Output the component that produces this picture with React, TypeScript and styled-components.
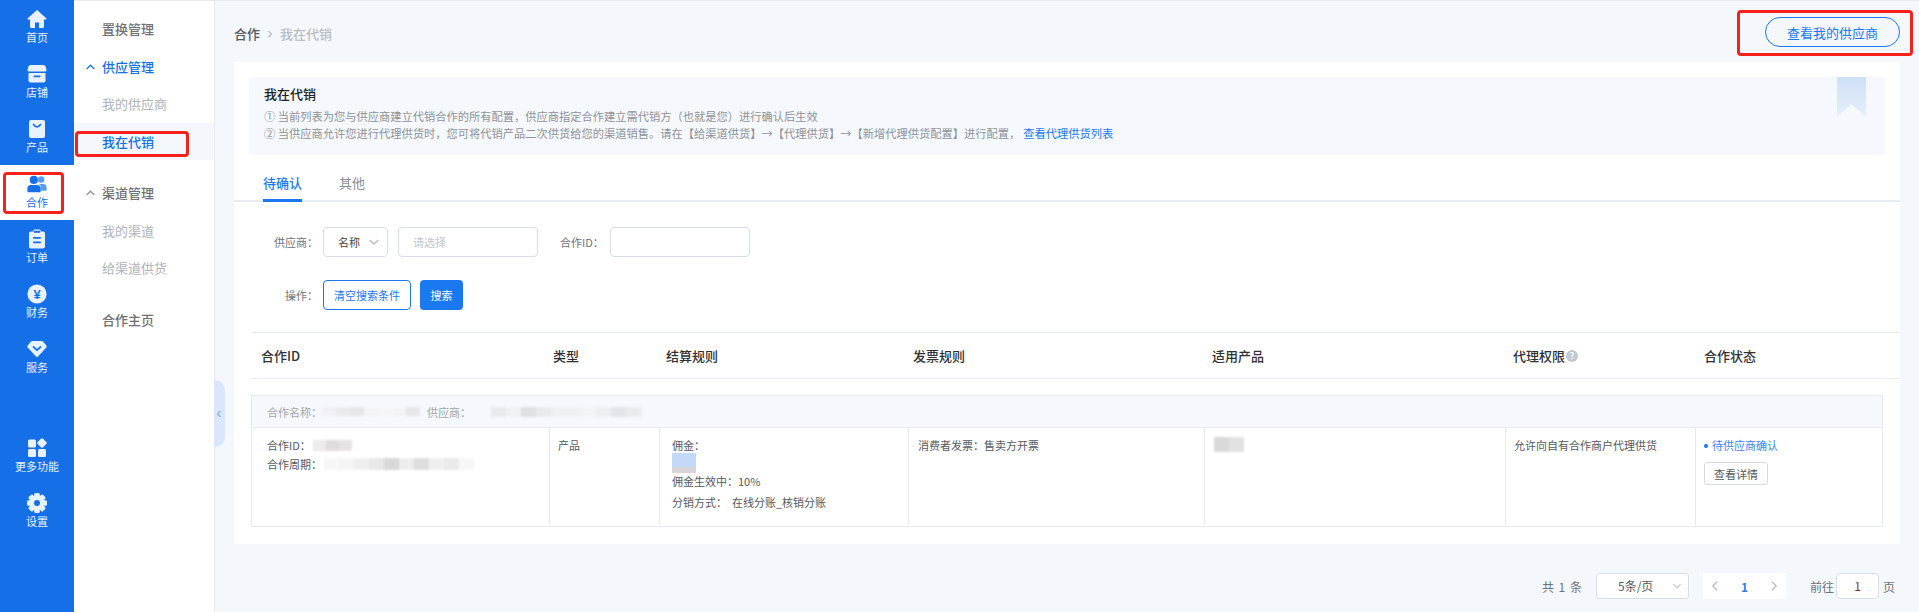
import React from 'react';
import styled, { createGlobalStyle } from 'styled-components';

const GlobalStyle = createGlobalStyle`
  html, body { margin: 0; padding: 0; }
  body {
    font-family: "Noto Sans CJK SC", "Noto Sans", sans-serif;
    background: #f4f7fc;
  }
  * { box-sizing: border-box; }
`;

const navTop = [
  { key: 'home', label: '首页' },
  { key: 'shop', label: '店铺' },
  { key: 'product', label: '产品' },
  { key: 'team', label: '合作', active: true },
  { key: 'order', label: '订单' },
  { key: 'money', label: '财务' },
  { key: 'service', label: '服务' },
];
const navBottom = [
  { key: 'more', label: '更多功能' },
  { key: 'gear', label: '设置' },
];

const NavIcon: React.FC<{ name: string }> = ({ name }) => {
  const cut = '#1570e8';
  switch (name) {
    case 'home':
      return (
        <svg width="20" height="20" viewBox="0 0 20 20">
          <path fill="currentColor" d="M10 1 L0.5 9.6 Q0.2 10.5 1 10.5 H3 V17.5 Q3 19 4.5 19 H8 V13.5 H12 V19 H15.5 Q17 19 17 17.5 V10.5 H19 Q19.8 10.5 19.5 9.6 Z" />
        </svg>
      );
    case 'shop':
      return (
        <svg width="20" height="20" viewBox="0 0 20 20">
          <path fill="currentColor" d="M3.5 1 H16.5 Q18 1 18.6 2.6 L19.5 6 Q19.5 7.5 18 7.5 H2 Q0.5 7.5 0.5 6 L1.4 2.6 Q2 1 3.5 1 Z" />
          <path fill="currentColor" d="M1.5 9 H18.5 V16.5 Q18.5 18.5 16.5 18.5 H3.5 Q1.5 18.5 1.5 16.5 Z" />
          <rect x="6.5" y="11.5" width="7" height="1.8" rx="0.9" fill={cut} />
        </svg>
      );
    case 'product':
      return (
        <svg width="20" height="20" viewBox="0 0 20 20">
          <rect x="2" y="1" width="16" height="18" rx="2" fill="currentColor" />
          <path d="M6.5 5.5 Q10 10.5 13.5 5.5" fill="none" stroke={cut} strokeWidth="1.6" strokeLinecap="round" />
        </svg>
      );
    case 'team':
      return (
        <svg width="20" height="20" viewBox="0 -1 22 22">
          <circle cx="15.5" cy="5" r="3.6" fill="#5b9bf2" />
          <path fill="#5b9bf2" d="M13 10 H18 Q21.5 10 21.5 14 V17.5 H15 V12 Z" />
          <circle cx="7.5" cy="5.5" r="4.5" fill="currentColor" />
          <path fill="currentColor" d="M4 11 H11 Q15 11 15 15 V19 H0.5 V15 Q0.5 11 4 11 Z" />
        </svg>
      );
    case 'order':
      return (
        <svg width="20" height="20" viewBox="0 0 20 20">
          <path fill="currentColor" d="M4 2.5 H6.5 V1.5 Q6.5 0.5 7.5 0.5 H12.5 Q13.5 0.5 13.5 1.5 V2.5 H16 Q18 2.5 18 4.5 V17.5 Q18 19.5 16 19.5 H4 Q2 19.5 2 17.5 V4.5 Q2 2.5 4 2.5 Z" />
          <rect x="7" y="1.8" width="6" height="2" fill={cut} />
          <rect x="6" y="8" width="8" height="1.7" rx="0.8" fill={cut} />
          <rect x="6" y="12.5" width="8" height="1.7" rx="0.8" fill={cut} />
        </svg>
      );
    case 'money':
      return (
        <svg width="20" height="20" viewBox="0 0 20 20">
          <circle cx="10" cy="10" r="9.6" fill="currentColor" />
          <text x="10" y="14.5" textAnchor="middle" fontSize="13" fontWeight="700" fill={cut} fontFamily="Liberation Sans, sans-serif">¥</text>
        </svg>
      );
    case 'service':
      return (
        <svg width="20" height="20" viewBox="0 0 20 20">
          <path fill="currentColor" d="M5.5 2 H14.5 Q15.5 2 16.2 2.8 L19.3 6.6 Q20 7.5 19.3 8.4 L11 17.4 Q10 18.4 9 17.4 L0.7 8.4 Q0 7.5 0.7 6.6 L3.8 2.8 Q4.5 2 5.5 2 Z" />
          <path d="M6.5 8 L10 11.2 L13.5 8" fill="none" stroke={cut} strokeWidth="1.7" strokeLinecap="round" />
        </svg>
      );
    case 'more':
      return (
        <svg width="20" height="20" viewBox="0 0 20 20">
          <rect x="1" y="1.5" width="8" height="8" rx="1.5" fill="currentColor" />
          <rect x="1" y="11" width="8" height="8" rx="1.5" fill="currentColor" />
          <rect x="11" y="11" width="8" height="8" rx="1.5" fill="currentColor" />
          <rect x="11.2" y="1.2" width="7.6" height="7.6" rx="1.5" fill="currentColor" transform="rotate(45 15 5)" />
        </svg>
      );
    default:
      return (
        <svg width="20" height="20" viewBox="0 0 20 20">
          {[0, 45, 90, 135].map(a => (
            <rect key={a} x="7.2" y="0" width="5.6" height="20" rx="1.5" fill="currentColor" transform={`rotate(${a} 10 10)`} />
          ))}
          <circle cx="10" cy="10" r="7.6" fill="currentColor" />
          <circle cx="10" cy="10" r="3" fill={cut} />
        </svg>
      );
  }
};

const Chevron: React.FC<{ dir: 'up' | 'down' | 'left' | 'right'; size?: number; color: string }> = ({ dir, size = 10, color }) => {
  const d = {
    up: 'M2 7 L5 4 L8 7',
    down: 'M2 3.5 L5 6.5 L8 3.5',
    left: 'M6.5 2 L3.5 5 L6.5 8',
    right: 'M3.5 2 L6.5 5 L3.5 8',
  }[dir];
  return (
    <svg width={size} height={size} viewBox="0 0 10 10">
      <path d={d} fill="none" stroke={color} strokeWidth="1" />
    </svg>
  );
};

// pixelated privacy smudges from the screenshot
const Mosaic: React.FC<{ cells: string[]; w: number; h: number }> = ({ cells, w, h }) => (
  <MosaicWrap>
    {cells.map((c, i) => (
      <MosaicCell key={i} $c={c} $w={w} $h={h} />
    ))}
  </MosaicWrap>
);

const columns = [
  { title: '合作ID', head: 10 },
  { title: '类型', head: 5 },
  { title: '结算规则', head: 8 },
  { title: '发票规则', head: 6 },
  { title: '适用产品', head: 9 },
  { title: '代理权限', head: 9, tip: true },
  { title: '合作状态', head: 10 },
];

export default function App() {
  return (
    <Page>
      <GlobalStyle />
      <Sidebar>
        <NavGroup>
          {navTop.map(n => (
            <NavItem key={n.key} $active={n.active}>
              <NavIcon name={n.key} />
              <span>{n.label}</span>
            </NavItem>
          ))}
        </NavGroup>
        <NavGroup $bottom>
          {navBottom.map(n => (
            <NavItem key={n.key}>
              <NavIcon name={n.key} />
              <span>{n.label}</span>
            </NavItem>
          ))}
        </NavGroup>
        <RedBox $left={3} $top={172} $w={61} $h={42} />
      </Sidebar>

      <SubMenu>
        <SubItem $kind="parent">置换管理</SubItem>
        <SubItem $kind="open">
          <Caret><Chevron dir="up" color="#1570e8" size={13} /></Caret>供应管理
        </SubItem>
        <SubItem>我的供应商</SubItem>
        <SubItem $kind="current">我在代销</SubItem>
        <SubItem $kind="parent" $gap>
          <Caret><Chevron dir="up" color="#8a8f99" size={13} /></Caret>渠道管理
        </SubItem>
        <SubItem>我的渠道</SubItem>
        <SubItem>给渠道供货</SubItem>
        <SubItem $kind="parent" $gap>合作主页</SubItem>
        <RedBox $left={1} $top={130} $w={114} $h={26} />
        <Handle><Chevron dir="left" color="#4c8cf0" /></Handle>
      </SubMenu>

      <Main>
        <TopBar>
          <Crumbs>
            <b>合作</b>
            <Chevron dir="right" color="#8a8f99" />
            <em>我在代销</em>
          </Crumbs>
          <PillButton>查看我的供应商</PillButton>
          <RedBox $right={-13} $top={9} $w={176} $h={46} />
        </TopBar>

        <Card>
          <Notice>
            <NoticeTitle>我在代销</NoticeTitle>
            <NoticeLine>① 当前列表为您与供应商建立代销合作的所有配置，供应商指定合作建立需代销方（也就是您）进行确认后生效</NoticeLine>
            <NoticeLine>
              ② 当供应商允许您进行代理供货时，您可将代销产品二次供货给您的渠道销售。请在【给渠道供货】→【代理供货】→【新增代理供货配置】进行配置，
              <NoticeLink>查看代理供货列表</NoticeLink>
            </NoticeLine>
            <Bookmark />
          </Notice>

          <Tabs>
            <Tab $active>待确认</Tab>
            <Tab>其他</Tab>
          </Tabs>

          <FormRow $first>
            <FormLabel>供应商：</FormLabel>
            <SelectBox>
              名称
              <Chevron dir="down" color="#b8bec8" size={14} />
            </SelectBox>
            <TextBox $placeholder>请选择</TextBox>
            <InlineLabel>合作ID：</InlineLabel>
            <TextBox />
          </FormRow>
          <FormRow>
            <FormLabel>操作：</FormLabel>
            <GhostButton>清空搜索条件</GhostButton>
            <SolidButton>搜索</SolidButton>
          </FormRow>

          <TableHead>
            {columns.map(c => (
              <HeadCell key={c.title} $pad={c.head}>
                {c.title}
                {c.tip && <Tip>?</Tip>}
              </HeadCell>
            ))}
          </TableHead>

          <GroupBar>
            <GroupLabel>合作名称：</GroupLabel>
            <Mosaic w={14} h={9} cells={['#f1f1f3', '#eaeaec', '#e6e6e9', '#f4f4f6', '#f6f6f8', '#f3f3f5', '#e7e7ea']} />
            <GroupLabel $ml={7} $mr={20}>供应商：</GroupLabel>
            <Mosaic w={15} h={10} cells={['#e8e9ec', '#f0f1f4', '#dfe0e4', '#e9eaee', '#eff0f3', '#eff0f3', '#f2f3f6', '#eceef2', '#e4e5ea', '#e9ebef']} />
          </GroupBar>

          <Row>
            <Cell $pad={15}>
              <Line>合作ID： <Mosaic w={13} h={11} cells={['#eceaeb', '#dfdcde', '#e6e3e5']} /></Line>
              <Line $mt={3}>合作周期： <Mosaic w={15} h={12} cells={['#f7f7f7', '#f5f5f5', '#efefef', '#e8e8e8', '#d8d8d8', '#eeeeee', '#dedede', '#efefef', '#eaeaea', '#f7f7f7']} /></Line>
            </Cell>
            <Cell $pad={8}>产品</Cell>
            <Cell $pad={12}>
              <Line>佣金：</Line>
              <Smudge />
              <Line>佣金生效中：10%</Line>
              <Line $mt={5}>分销方式：&nbsp;&nbsp;在线分账_核销分账</Line>
            </Cell>
            <Cell $pad={9}>消费者发票：售卖方开票</Cell>
            <Cell $pad={9}>
              <Mosaic w={15} h={15} cells={['#d9d9d9', '#e2e2e2']} />
            </Cell>
            <Cell $pad={8}>允许向自有合作商户代理供货</Cell>
            <Cell $pad={8}>
              <Status>待供应商确认</Status>
              <DetailButton>查看详情</DetailButton>
            </Cell>
          </Row>
        </Card>

        <Footer>
          <TotalCount>共 1 条</TotalCount>
          <PageSize>
            5条/页
            <PageSizeArrow><Chevron dir="down" color="#c3c8d0" size={12} /></PageSizeArrow>
          </PageSize>
          <Pager>
            <Chevron dir="left" color="#b8bec8" size={14} />
            <strong>1</strong>
            <Chevron dir="right" color="#b8bec8" size={14} />
          </Pager>
          <JumpLabel>前往</JumpLabel>
          <JumpInput>1</JumpInput>
          <span>页</span>
        </Footer>
      </Main>
    </Page>
  );
}

const Page = styled.div`
  display: flex;
  width: 1919px;
  height: 612px;
  overflow: hidden;
`;

const Sidebar = styled.aside`
  position: relative;
  flex: 0 0 74px;
  background: #1570e8;
`;

const NavGroup = styled.div<{ $bottom?: boolean }>`
  margin-top: ${p => (p.$bottom ? '44px' : '0')};
`;

const NavItem = styled.div<{ $active?: boolean }>`
  height: 55px;
  padding-top: 9px;
  display: flex;
  flex-direction: column;
  align-items: center;
  font-size: 11px;
  line-height: 16px;
  color: ${p => (p.$active ? '#1570e8' : '#e8f1fe')};
  background: ${p => (p.$active ? '#fff' : 'transparent')};
`;

const SubMenu = styled.nav`
  position: relative;
  flex: 0 0 141px;
  padding-top: 9px;
  background: #fff;
  border-top: 1px solid #e9e9ec;
  border-right: 1px solid #e6ebf3;
`;

const SubItem = styled.div<{ $kind?: 'parent' | 'open' | 'current'; $gap?: boolean }>`
  position: relative;
  height: 37.5px;
  line-height: 37.5px;
  padding-left: 28px;
  margin-top: ${p => (p.$gap ? '14px' : '0')};
  font-size: 13px;
  font-weight: ${p => (p.$kind ? 500 : 400)};
  color: ${p => {
    if (p.$kind === 'open' || p.$kind === 'current') return '#1570e8';
    return p.$kind === 'parent' ? '#6f6f72' : '#b0b3b8';
  }};
  background: ${p => (p.$kind === 'current' ? '#f4f7fc' : 'transparent')};
`;

const Caret = styled.span`
  position: absolute;
  left: 10px;
  top: 12px;
  display: flex;
`;

const Handle = styled.div`
  position: absolute;
  left: 140px;
  top: 379px;
  width: 11px;
  height: 67px;
  display: flex;
  align-items: center;
  background: #d9e6fb;
  border-radius: 0 10px 10px 0;
  z-index: 2;
`;

const RedBox = styled.div<{ $left?: number; $right?: number; $top: number; $w: number; $h: number }>`
  position: absolute;
  ${p => (p.$left !== undefined ? `left: ${p.$left}px;` : '')}
  ${p => (p.$right !== undefined ? `right: ${p.$right}px;` : '')}
  top: ${p => p.$top}px;
  width: ${p => p.$w}px;
  height: ${p => p.$h}px;
  border: 3px solid #f5221b;
  border-radius: 4px;
  z-index: 3;
`;

const Main = styled.main`
  flex: 1;
  min-width: 0;
  padding: 0 19px;
  border-top: 1px solid #e9e9ec;
`;

const TopBar = styled.header`
  position: relative;
  height: 61px;
  display: flex;
  align-items: flex-start;
  justify-content: space-between;
`;

const Crumbs = styled.div`
  display: flex;
  align-items: center;
  gap: 5px;
  margin-top: 23px;
  font-size: 13px;
  line-height: 19px;
  b { font-weight: 500; color: #55585e; }
  em { font-style: normal; font-weight: 500; color: #b9bcc2; }
`;

const PillButton = styled.button`
  width: 135px;
  height: 30px;
  margin-top: 16px;
  padding: 0;
  border: 1px solid #1a78f0;
  border-radius: 15px;
  background: transparent;
  color: #1a78f0;
  font: 13px "Noto Sans CJK SC", sans-serif;
`;

const Card = styled.section`
  height: 482px;
  padding-top: 15px;
  background: #fff;
`;

const Notice = styled.div`
  position: relative;
  height: 78px;
  margin: 0 15px;
  padding: 7px 15px 0;
  background: #f5f8fd;
`;

const NoticeTitle = styled.div`
  font-size: 13px;
  font-weight: 500;
  line-height: 19px;
  color: #222;
  margin-bottom: 5px;
`;

const NoticeLine = styled.div`
  font-size: 11.25px;
  line-height: 17px;
  color: #8f9298;
`;

const NoticeLink = styled.span`
  margin-left: 3px;
  color: #1a78f0;
`;

const Bookmark = styled.div`
  position: absolute;
  right: 19px;
  top: 0;
  width: 29px;
  height: 40px;
  background: linear-gradient(180deg, #cfe0f5, #e6effb);
  clip-path: polygon(0 0, 100% 0, 100% 100%, 50% 68%, 0 100%);
`;

const Tabs = styled.div`
  display: flex;
  align-items: flex-end;
  gap: 37px;
  height: 47px;
  padding-left: 29px;
  border-bottom: 2px solid #e8edf3;
`;

const Tab = styled.div<{ $active?: boolean }>`
  height: 32px;
  margin-bottom: -2px;
  padding-top: 3px;
  font-size: 13px;
  line-height: 19px;
  font-weight: ${p => (p.$active ? 500 : 400)};
  color: ${p => (p.$active ? '#1a78f0' : '#8a8d93')};
  border-bottom: ${p => (p.$active ? '3px solid #1a78f0' : 'none')};
`;

const FormRow = styled.div<{ $first?: boolean }>`
  display: flex;
  align-items: center;
  height: 30px;
  margin-top: ${p => (p.$first ? '25px' : '23px')};
`;

const FormLabel = styled.label`
  width: 84px;
  margin-right: 5px;
  text-align: right;
  font-size: 11px;
  color: #6f7278;
`;

const InlineLabel = styled.label`
  width: 50px;
  margin-left: 22px;
  font-size: 11px;
  color: #6f7278;
`;

const SelectBox = styled.div`
  width: 65px;
  height: 30px;
  margin-right: 10px;
  display: flex;
  align-items: center;
  justify-content: space-between;
  padding: 0 6px 0 14px;
  border: 1px solid #d8dee8;
  border-radius: 4px;
  font-size: 11px;
  color: #444;
`;

const TextBox = styled.div<{ $placeholder?: boolean }>`
  width: 140px;
  height: 30px;
  padding-left: 14px;
  line-height: 28px;
  border: 1px solid #d8dee8;
  border-radius: 4px;
  font-size: 11px;
  color: ${p => (p.$placeholder ? '#c4c7cc' : '#444')};
`;

const GhostButton = styled.button`
  width: 88px;
  height: 30px;
  margin-right: 9px;
  padding: 0;
  border: 1px solid #1a78f0;
  border-radius: 4px;
  background: #fff;
  color: #1a78f0;
  font: 11px "Noto Sans CJK SC", sans-serif;
`;

const SolidButton = styled.button`
  width: 43px;
  height: 30px;
  padding: 0;
  border: none;
  border-radius: 4px;
  background: #1a78f0;
  color: #fff;
  font: 11px "Noto Sans CJK SC", sans-serif;
`;

const tableColumns = '297px 110px 249px 296px 301px 190px 189px';

const TableHead = styled.div`
  display: grid;
  grid-template-columns: ${tableColumns};
  align-items: center;
  height: 47px;
  margin: 22px 0 16px 17px;
  border-top: 1px solid #e8edf3;
  border-bottom: 1px solid #e8edf3;
`;

const HeadCell = styled.div<{ $pad: number }>`
  display: flex;
  align-items: center;
  padding-left: ${p => p.$pad}px;
  font-size: 13px;
  font-weight: 500;
  color: #303133;
`;

const Tip = styled.span`
  width: 12px;
  height: 12px;
  margin-left: 1px;
  border-radius: 50%;
  background: #c3c9d3;
  color: #fff;
  font-size: 9px;
  line-height: 12px;
  text-align: center;
`;

const GroupBar = styled.div`
  display: flex;
  align-items: center;
  height: 33px;
  width: 1632px;
  margin-left: 17px;
  padding-left: 15px;
  background: #f5f8fd;
  border: 1px solid #e6ebf2;
`;

const GroupLabel = styled.span<{ $ml?: number; $mr?: number }>`
  margin-left: ${p => p.$ml ?? 0}px;
  margin-right: ${p => p.$mr ?? 0}px;
  font-size: 11px;
  color: #a3a6ab;
`;

const Row = styled.div`
  display: grid;
  grid-template-columns: ${tableColumns};
  width: 1632px;
  height: 99px;
  margin-left: 17px;
  border: 1px solid #e6ebf2;
  border-top: none;
`;

const Cell = styled.div<{ $pad: number }>`
  padding: 9px 0 0 ${p => p.$pad}px;
  font-size: 11px;
  line-height: 16px;
  color: #55585e;
  border-left: 1px solid #e6ebf2;
  &:first-child { border-left: none; }
`;

const Line = styled.div<{ $mt?: number }>`
  display: flex;
  align-items: center;
  white-space: pre;
  margin-top: ${p => p.$mt ?? 0}px;
`;

const MosaicWrap = styled.span`
  display: inline-flex;
  filter: blur(0.8px);
`;

const MosaicCell = styled.span<{ $c: string; $w: number; $h: number }>`
  display: block;
  width: ${p => p.$w}px;
  height: ${p => p.$h}px;
  background: ${p => p.$c};
`;

const Smudge = styled.div`
  width: 24px;
  height: 20px;
  background: linear-gradient(180deg, #c4d8f8 0 70%, #d8d6d8 70%);
  filter: blur(0.6px);
`;

const Status = styled.div`
  color: #3b86f2;
  &::before {
    content: '';
    display: inline-block;
    width: 4px;
    height: 4px;
    margin-right: 4px;
    vertical-align: 2px;
    border-radius: 50%;
    background: #1a78f0;
  }
`;

const DetailButton = styled.button`
  display: block;
  width: 64px;
  height: 23px;
  margin-top: 9px;
  padding: 0;
  border: 1px solid #d5d9e0;
  border-radius: 3px;
  background: #fff;
  color: #55585e;
  font: 11px "Noto Sans CJK SC", sans-serif;
`;

const Footer = styled.footer`
  display: flex;
  align-items: center;
  justify-content: flex-end;
  height: 26px;
  margin-top: 29px;
  padding-right: 5px;
  font-size: 12px;
  color: #6f7278;
`;

const TotalCount = styled.span`
  word-spacing: 2px;
`;

const PageSize = styled.div`
  position: relative;
  width: 93px;
  height: 26px;
  margin: 0 14px;
  padding-left: 21px;
  line-height: 24px;
  background: #fff;
  border: 1px solid #d8dee8;
  border-radius: 3px;
  color: #55585e;
`;

const PageSizeArrow = styled.span`
  position: absolute;
  right: 5px;
  top: 6px;
  display: flex;
`;

const Pager = styled.div`
  width: 83px;
  height: 26px;
  display: flex;
  align-items: center;
  justify-content: space-between;
  padding: 0 5px;
  background: #fff;
  strong { font-weight: 700; color: #2f7cf2; }
`;

const JumpLabel = styled.span`
  margin-left: 24px;
`;

const JumpInput = styled.div`
  width: 43px;
  height: 26px;
  margin: 0 4px 0 2px;
  line-height: 24px;
  text-align: center;
  background: #fff;
  border: 1px solid #d8dee8;
  border-radius: 4px;
  color: #7a3b2e;
`;
